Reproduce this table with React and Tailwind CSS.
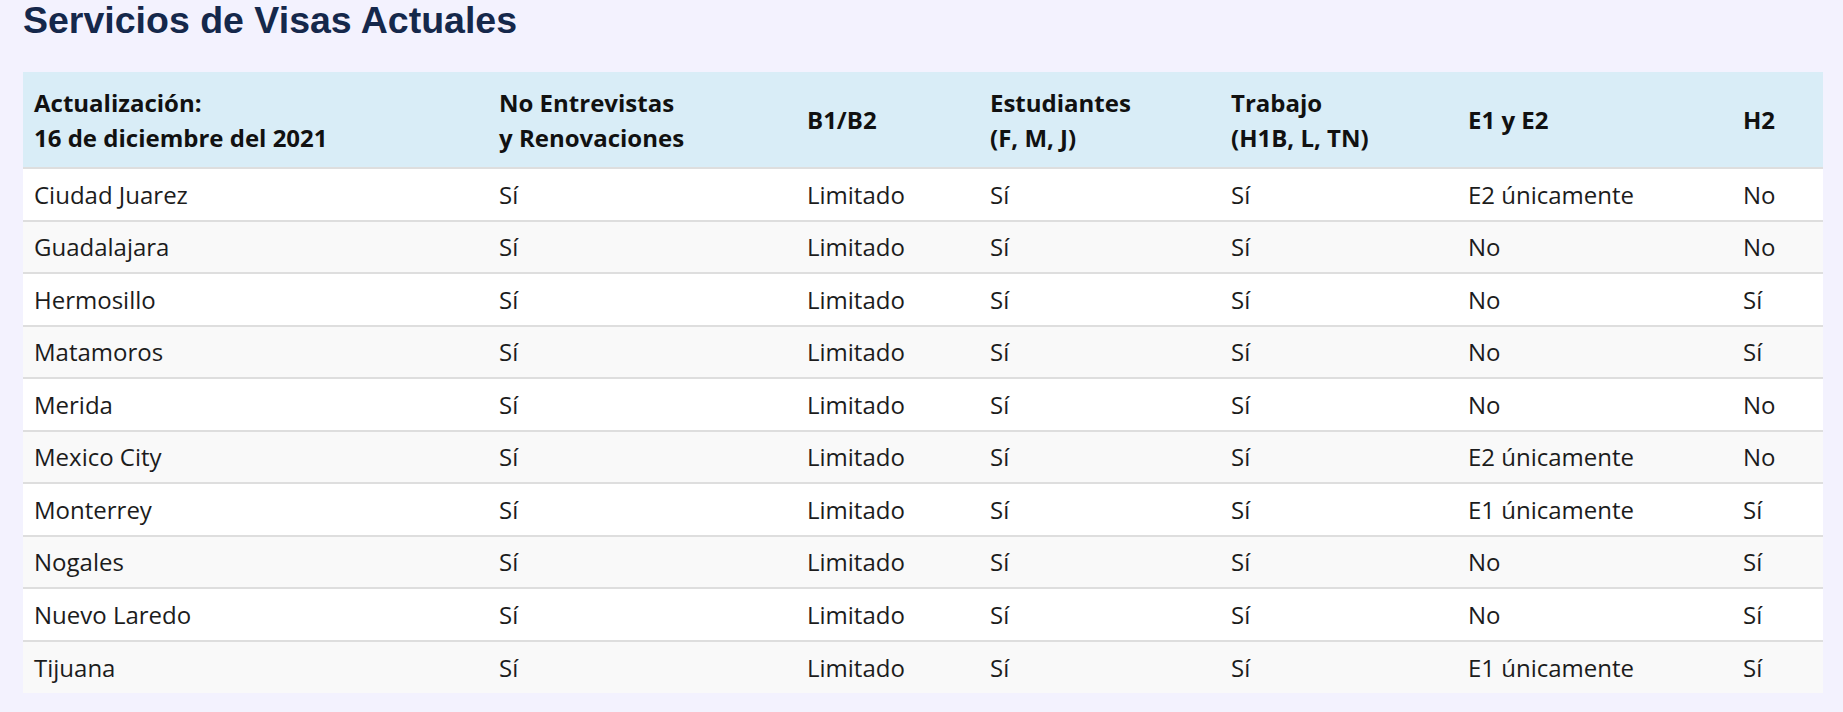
import React from "react";

const headers = [
  ["Actualización:", "16 de diciembre del 2021"],
  ["No Entrevistas", "y Renovaciones"],
  ["B1/B2"],
  ["Estudiantes", "(F, M, J)"],
  ["Trabajo", "(H1B, L, TN)"],
  ["E1 y E2"],
  ["H2"],
];

const widths = ["w-[465px]", "w-[308px]", "w-[183px]", "w-[241px]", "w-[237px]", "w-[275px]", "w-[91px]"];

const rows = [
  ["Ciudad Juarez", "Sí", "Limitado", "Sí", "Sí", "E2 únicamente", "No"],
  ["Guadalajara", "Sí", "Limitado", "Sí", "Sí", "No", "No"],
  ["Hermosillo", "Sí", "Limitado", "Sí", "Sí", "No", "Sí"],
  ["Matamoros", "Sí", "Limitado", "Sí", "Sí", "No", "Sí"],
  ["Merida", "Sí", "Limitado", "Sí", "Sí", "No", "No"],
  ["Mexico City", "Sí", "Limitado", "Sí", "Sí", "E2 únicamente", "No"],
  ["Monterrey", "Sí", "Limitado", "Sí", "Sí", "E1 únicamente", "Sí"],
  ["Nogales", "Sí", "Limitado", "Sí", "Sí", "No", "Sí"],
  ["Nuevo Laredo", "Sí", "Limitado", "Sí", "Sí", "No", "Sí"],
  ["Tijuana", "Sí", "Limitado", "Sí", "Sí", "E1 únicamente", "Sí"],
];

export default function App() {
  return (
    <div className="min-h-[712px] w-full bg-[#f3f2fe] px-[23px] pt-[2px] font-['Open_Sans','Noto_Sans',sans-serif]">
      <h2 className="font-['Liberation_Sans',Arial,sans-serif] text-[37.5px] font-bold leading-[36px] text-[#15284b]">
        Servicios de Visas Actuales
      </h2>

      <table className="mt-[34px] w-[1800px] table-fixed border-collapse text-[24px] text-[#1c1c1c]">
        <thead>
          <tr className="h-[96px] bg-[#d9edf7]">
            {headers.map((lines, i) => (
              <th
                key={i}
                className={`${widths[i]} px-[11px] text-left align-middle font-bold leading-[35px] text-[#111]`}
              >
                {lines.map((l, j) => (
                  <div key={j}>{l}</div>
                ))}
              </th>
            ))}
          </tr>
        </thead>
        <tbody>
          {rows.map((row, r) => (
            <tr
              key={r}
              className={`h-[52.5px] border-t-2 border-[#dedede] ${r % 2 === 0 ? "bg-white" : "bg-[#f9f9f9]"}`}
            >
              {row.map((cell, c) => (
                <td key={c} className="px-[11px] py-0 align-middle leading-[35px]">
                  {cell}
                </td>
              ))}
            </tr>
          ))}
        </tbody>
      </table>
    </div>
  );
}
